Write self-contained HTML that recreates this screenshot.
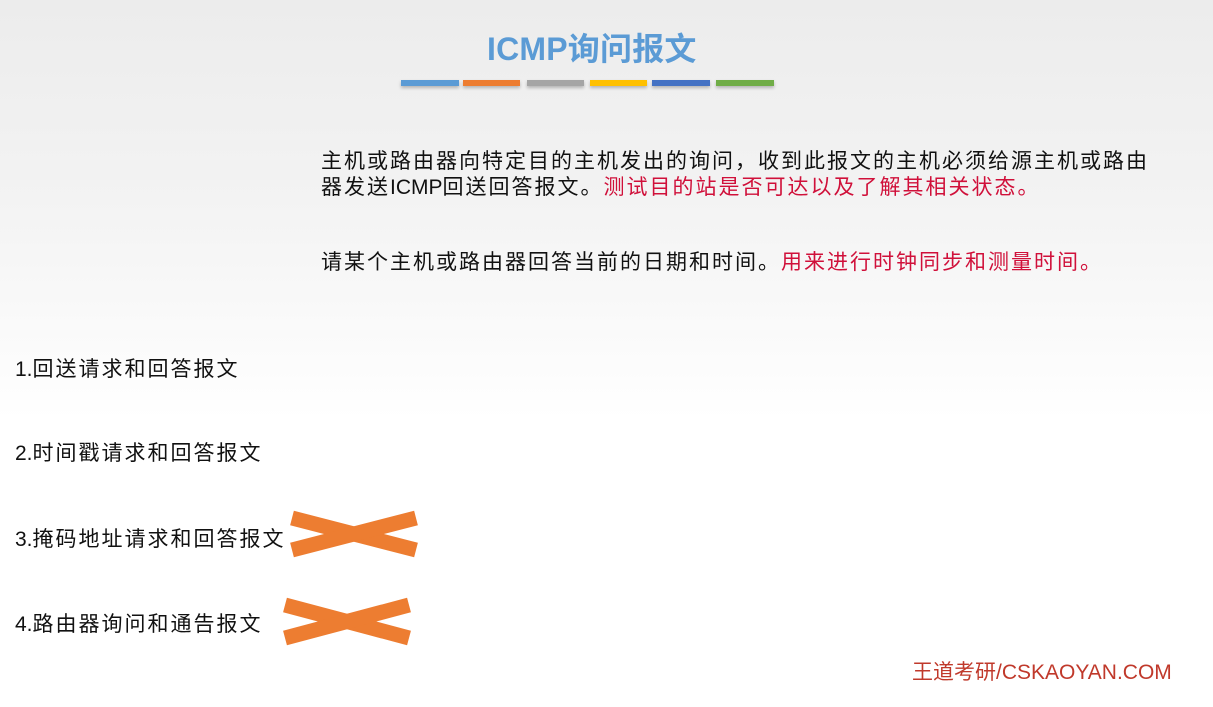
<!DOCTYPE html><html><head><meta charset="utf-8"><style>
body{margin:0;width:1213px;height:707px;overflow:hidden;background:linear-gradient(#ececec 0,#f3f3f3 200px,#fff 420px);font-family:"Liberation Sans","Noto Sans CJK SC",sans-serif;position:relative;color:#111}
.a{position:absolute;white-space:nowrap}
.bar{position:absolute;top:80px;height:6px;width:58px;box-shadow:0 2px 3px rgba(0,0,0,.25)}
.r{color:#d0103a}
.t{font-size:21px;letter-spacing:2px}
.l{letter-spacing:0}
</style></head><body>
<div class="a" style="left:487px;top:24px;font-size:32px;font-weight:bold;color:#5b9bd5;letter-spacing:0.2px">ICMP询问报文</div>
<div class="bar" style="left:401px;background:#5b9bd5"></div>
<div class="bar" style="left:463px;background:#ed7d31;width:57px"></div>
<div class="bar" style="left:527px;background:#a5a5a5;width:57px"></div>
<div class="bar" style="left:590px;background:#ffc000;width:57px"></div>
<div class="bar" style="left:652px;background:#4472c4"></div>
<div class="bar" style="left:716px;background:#70ad47"></div>
<div class="a t" style="left:321px;top:149px;line-height:26px">主机或路由器向特定目的主机发出的询问，收到此报文的主机必须给源主机或路由<br>器发送<span class="l">ICMP</span>回送回答报文。<span class="r">测试目的站是否可达以及了解其相关状态。</span></div>
<div class="a t" style="left:321px;top:246px">请某个主机或路由器回答当前的日期和时间。<span class="r">用来进行时钟同步和测量时间。</span></div>
<div class="a t" style="left:15px;top:353px"><span class="l">1.</span>回送请求和回答报文</div>
<div class="a t" style="left:15px;top:437px"><span class="l">2.</span>时间戳请求和回答报文</div>
<div class="a t" style="left:15px;top:523px"><span class="l">3.</span>掩码地址请求和回答报文</div>
<div class="a t" style="left:15px;top:608px"><span class="l">4.</span>路由器询问和通告报文</div>
<svg class="a" style="left:0;top:0" width="1213" height="707">
<g stroke="#ed7d31" stroke-width="15"><line x1="292" y1="518" x2="416" y2="550"/><line x1="292" y1="550" x2="416" y2="518"/>
<line x1="285" y1="605" x2="409" y2="638"/><line x1="285" y1="638" x2="409" y2="605"/></g></svg>
<div class="a" style="left:912px;top:656px;font-size:21px;color:#c0392b">王道考研/CSKAOYAN.COM</div>
</body></html>
